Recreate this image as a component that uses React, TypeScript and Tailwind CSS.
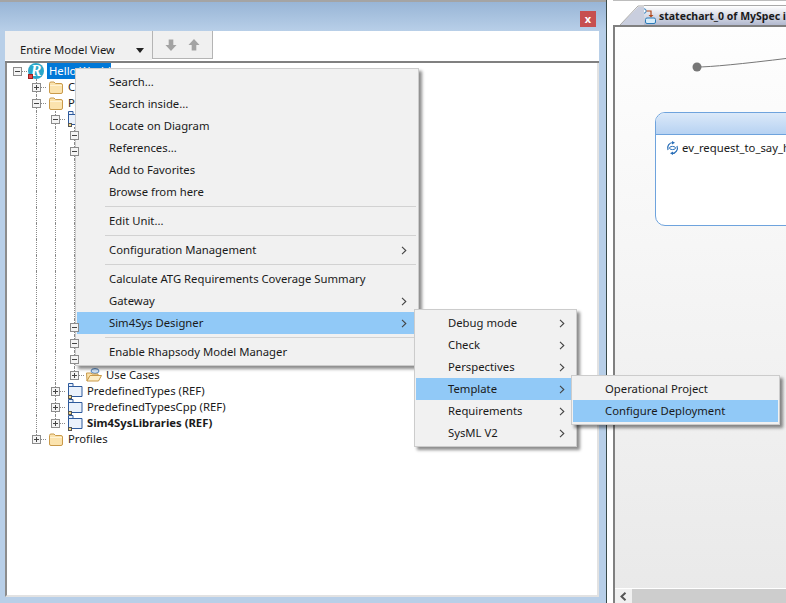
import React from "react";

const font = { fontFamily: '"Noto Sans", "Open Sans", sans-serif' };

function Chevron() {
  return (
    <svg width="6" height="9" viewBox="0 0 6 9" className="shrink-0">
      <path d="M1 0.8 L4.8 4.5 L1 8.2" fill="none" stroke="#444" strokeWidth="1.1" />
    </svg>
  );
}

function Folder() {
  return (
    <svg width="14" height="13" viewBox="0 0 14 13" className="shrink-0">
      <path d="M0.5 2.5 Q0.5 1 2 1 H5 L6.5 2.5 H12 Q13.5 2.5 13.5 4 V11 Q13.5 12.5 12 12.5 H2 Q0.5 12.5 0.5 11 Z" fill="#fbe3ae" stroke="#c99a4a" />
      <path d="M1 4.5 H13" stroke="#fff3d4" />
    </svg>
  );
}

function Pkg() {
  return (
    <svg width="16" height="16" viewBox="0 0 16 16" className="shrink-0">
      <path d="M1.5 0.5 H6 V3.5 H15 V13.5 H1.5 Z" fill="#eaf1fb" stroke="#2e5a9c" />
      <path d="M1.5 3.5 H6" stroke="#2e5a9c" />
      <rect x="1.5" y="12.5" width="3" height="3" fill="#f3d98a" stroke="#555" />
    </svg>
  );
}

function OpenUC() {
  return (
    <svg width="16" height="14" viewBox="0 0 16 14" className="shrink-0">
      <ellipse cx="9" cy="3" rx="4" ry="2.4" fill="#cfe2f6" stroke="#4d7fb8" />
      <path d="M0.5 5 H5 L6 6 H12 V8 H4 L1 13 Z" fill="#fbe3ae" stroke="#c99a4a" />
      <path d="M1 13 L4 7.5 H15.5 L12.5 13 Z" fill="#fdeec8" stroke="#c99a4a" />
    </svg>
  );
}

function Logo() {
  return (
    <div className="relative w-[16px] h-[16px] shrink-0 rounded-full bg-[#2aa7c9] flex items-center justify-center">
      <span className="text-white italic font-bold text-[16px] leading-none" style={{ fontFamily: '"Liberation Serif", serif' }}>R</span>
      <span className="absolute left-0 bottom-0 w-[5px] h-[5px] bg-[#e04a4a] border border-[#a02020]" />
    </div>
  );
}

function Box({ open }: { open: boolean }) {
  return (
    <div className="relative z-10 w-[9px] h-[9px] shrink-0 bg-[#f4f4f4] border border-[#8c8c8c] flex items-center justify-center">
      <span className="absolute w-[5px] h-px bg-[#444]" />
      {!open && <span className="absolute h-[5px] w-px bg-[#444]" />}
    </div>
  );
}

type Row = {
  depth: number;
  guides: number[];
  exp?: "plus" | "minus";
  icon?: React.ReactNode;
  label?: string;
  bold?: boolean;
  sel?: boolean;
  last?: boolean;
};

const blank = { depth: 3, guides: [1, 2] };
const rows: Row[] = [
  { depth: 0, guides: [], exp: "minus", icon: <Logo />, label: "Hello World", sel: true },
  { depth: 1, guides: [], exp: "plus", icon: <Folder />, label: "Components" },
  { depth: 1, guides: [], exp: "minus", icon: <Folder />, label: "Packages" },
  { depth: 2, guides: [1], exp: "minus", icon: <Pkg />, label: "MySpec" },
  { depth: 3, guides: [1, 2], exp: "minus" },
  { depth: 3, guides: [1, 2], exp: "minus" },
  ...Array.from({ length: 10 }, () => blank),
  { depth: 3, guides: [1, 2], exp: "minus" },
  { depth: 3, guides: [1, 2], exp: "minus" },
  { depth: 3, guides: [1, 2], exp: "minus" },
  { depth: 3, guides: [1, 2], exp: "plus", icon: <OpenUC />, label: "Use Cases", last: true },
  { depth: 2, guides: [1], exp: "plus", icon: <Pkg />, label: "PredefinedTypes (REF)" },
  { depth: 2, guides: [1], exp: "plus", icon: <Pkg />, label: "PredefinedTypesCpp (REF)" },
  { depth: 2, guides: [1], exp: "plus", icon: <Pkg />, label: "Sim4SysLibraries (REF)", bold: true, last: true },
  { depth: 1, guides: [], exp: "plus", icon: <Folder />, label: "Profiles", last: true },
];

function TreeRow({ r }: { r: Row }) {
  const cols = [0, 1, 2, 3].slice(0, r.depth);
  const iconM = r.depth === 0 ? 1 : r.depth === 1 ? 3 : 2;
  const textCls = r.sel
    ? "ml-[3px] px-[2px] w-[64px] bg-[#0078d7] text-white "
    : r.depth === 1
      ? "ml-[5px] text-[#1a1a1a] "
      : "ml-[4px] text-[#1a1a1a] ";
  return (
    <div className="flex h-4 items-center pl-[1px]">
      {cols.map((c) => (
        <div key={c} className="w-[19px] h-full shrink-0 pl-[9px]">
          {r.guides.includes(c) && <div className="h-full border-l border-dotted border-[#8a8a8a]" />}
        </div>
      ))}
      <div className="relative w-[19px] h-full shrink-0 flex items-center pl-[5px]">
        {r.depth > 0 && (
          <div className={"absolute left-[9px] top-0 border-l border-dotted border-[#8a8a8a] " + (r.last ? "h-1/2" : "h-full")} />
        )}
        {r.exp && <Box open={r.exp === "minus"} />}
        {r.icon && <div className="flex-1 border-t border-dotted border-[#8a8a8a]" />}
      </div>
      {r.icon && <div style={{ marginLeft: iconM }} className="flex items-center">{r.icon}</div>}
      {r.label && (
        <span className={"whitespace-nowrap text-[11.3px] leading-4 " + textCls + (r.bold ? "font-bold" : "")}>
          {r.label}
        </span>
      )}
    </div>
  );
}

function Item({ label, arrow, hot, tight }: { label: string; arrow?: boolean; hot?: boolean; tight?: boolean }) {
  return (
    <div
      className={
        "h-[22px] flex items-center pl-[32px] text-[11.3px] text-[#1a1a1a] whitespace-nowrap " +
        (tight ? "pr-[10px] " : "pr-[9px] ") +
        (hot ? "bg-[#91c9f7]" : "")
      }
    >
      <span className="flex-1">{label}</span>
      {arrow && <Chevron />}
    </div>
  );
}

function Sep() {
  return (
    <div className="h-[7px] flex items-center pl-[28px] pr-[1px]">
      <div className="h-px w-full bg-[#d2d2d2]" />
    </div>
  );
}

const menuCls = "absolute border border-[#cccccc] bg-[#f1f1f1] py-[2px] px-[1px] shadow-[3px_3px_3px_rgba(0,0,0,0.45)]";

export default function App() {
  return (
    <div className="relative w-[786px] h-[603px] overflow-hidden flex bg-white" style={font}>
      {/* left docked pane */}
      <div className="w-[606px] h-full shrink-0 flex flex-col bg-[#b8cfe8] border-t-2 border-[#a4a4a4]">
        <div className="h-[29px] shrink-0 bg-gradient-to-b from-[#98b5d6] to-[#b8cfe8] flex justify-end items-start pt-[9px] pr-[10px]">
          <div className="w-[16px] h-[16px] bg-[#c75050] text-white text-[11px] font-bold leading-[15px] text-center">x</div>
        </div>
        <div className="flex-1 ml-[5px] mr-[7px] mb-[6px] bg-white flex flex-col min-h-0">
          <div className="h-[32px] shrink-0 flex items-start border-b-2 border-[#808080]">
            <div className="w-[147px] h-[29px] bg-[#f0f0f0] flex items-center pl-[15px] pr-[8px] pt-[10px] text-[11.3px] text-[#1a1a1a]">
              <span className="flex-1 whitespace-nowrap">Entire Model View</span>
              <svg width="8" height="5" viewBox="0 0 8 5"><path d="M0 0 H8 L4 5 Z" fill="#222" /></svg>
            </div>
            <div className="w-[61px] h-[28px] bg-[#f0f0f0] border-x border-b border-[#b4b4b4] flex items-center justify-center gap-[11px]">
              <svg width="12" height="14" viewBox="0 0 13 14"><path d="M4 1 H9 V7 H12.5 L6.5 13.5 L0.5 7 H4 Z" fill="#a3a3a3" /></svg>
              <svg width="12" height="14" viewBox="0 0 13 14"><path d="M4 13 H9 V7 H12.5 L6.5 0.5 L0.5 7 H4 Z" fill="#a3a3a3" /></svg>
            </div>
          </div>
          <div className="flex-1 border-l-2 border-[#8c8c8c] border-b-2 border-b-[#e2e2e2] border-r-2 border-r-[#e2e2e2] overflow-hidden">
            {rows.map((r, i) => (
              <TreeRow key={i} r={r} />
            ))}
          </div>
        </div>
      </div>

      {/* splitter */}
      <div className="w-[7px] h-full shrink-0 bg-white border-l border-[#3a4a4a]" />

      {/* right diagram pane */}
      <div className="flex-1 min-w-0 h-full flex flex-col bg-white border-t border-[#bdbdbd]">
        <div className="h-[24px] shrink-0 flex items-end">
          <svg width="24" height="20" viewBox="0 0 24 20" className="shrink-0 ml-[7px]">
            <path d="M0 20 L18 2 H24 V20 Z" fill="#c9cede" />
            <path d="M0 20 L18 1 H24" fill="none" stroke="#a9a9a9" />
          </svg>
          <div className="flex-1 h-[20px] bg-gradient-to-b from-[#ffffff] to-[#b3bacf] flex items-center overflow-hidden border-t border-[#a9a9a9]">
            <svg width="15" height="16" viewBox="0 0 15 16" className="shrink-0 -ml-[3px]">
              <circle cx="3" cy="3" r="2.2" fill="#fff" stroke="#2a7ab8" />
              <path d="M5.5 3 H10 V8" fill="none" stroke="#b0481a" strokeWidth="1.2" />
              <path d="M7.5 7 H12.5 L10 9.5 Z" fill="#b0481a" />
              <rect x="4.5" y="10" width="10" height="5.5" rx="1.5" fill="#d6ecfa" stroke="#2a7ab8" />
            </svg>
            <span className="ml-[3px] pt-[2px] whitespace-nowrap text-[10.5px] font-bold text-[#1a1a1a]">statechart_0 of MySpec i...</span>
          </div>
        </div>
        <div className="relative flex-1 min-h-0 border-l-2 border-t-2 border-[#808080] bg-gradient-to-b from-[#fefefe] to-[#e9e9e9] overflow-hidden">
          <svg width="171" height="30" viewBox="0 0 171 30" className="absolute left-0 top-[25px]">
            <circle cx="82" cy="15" r="4.5" fill="#777" />
            <path d="M82 15 Q102 15 175 6" fill="none" stroke="#777" />
          </svg>
          <div className="absolute left-[40px] top-[85px] w-[200px] h-[114px] rounded-[10px] border border-[#6ea3dd] bg-white overflow-hidden">
            <div className="h-[22px] bg-gradient-to-b from-[#dbe9f9] to-[#b7d2f2] border-b border-[#6ea3dd]" />
            <div className="flex items-center pl-[10px] pt-[5px] text-[11.3px] text-[#1a1a1a] whitespace-nowrap">
              <svg width="13" height="14" viewBox="0 0 13 14" className="shrink-0 mr-[3px]">
                <path d="M2 9 A5.5 5.5 0 0 1 7 1.5 M11 5 A5.5 5.5 0 0 1 6 12.5" fill="none" stroke="#2a6fb8" strokeWidth="1.2" />
                <path d="M6 0 L9 1.8 L6 3.5 Z M7 10.5 L4 12.3 L7 14 Z" fill="#2a6fb8" />
                <ellipse cx="6.5" cy="7" rx="3" ry="1.6" fill="none" stroke="#2a6fb8" />
              </svg>
              ev_request_to_say_hello
            </div>
          </div>
          <div className="absolute left-0 right-0 bottom-0 h-[15px] border-t border-white bg-[#cdcdcd] flex">
            <div className="w-[17px] h-full bg-[#f0f0f0] flex items-center justify-center">
              <svg width="7" height="9" viewBox="0 0 7 9"><path d="M5.5 0.8 L1.5 4.5 L5.5 8.2" fill="none" stroke="#555" strokeWidth="2" /></svg>
            </div>
          </div>
        </div>
      </div>

      {/* context menus */}
      <div className={menuCls + " left-[75px] top-[68px] w-[344px]"}>
        <Item label="Search..." />
        <Item label="Search inside..." />
        <Item label="Locate on Diagram" />
        <Item label="References..." />
        <Item label="Add to Favorites" />
        <Item label="Browse from here" />
        <Sep />
        <Item label="Edit Unit..." />
        <Sep />
        <Item label="Configuration Management" arrow tight />
        <Sep />
        <Item label="Calculate ATG Requirements Coverage Summary" />
        <Item label="Gateway" arrow tight />
        <Item label="Sim4Sys Designer" arrow hot tight />
        <Sep />
        <Item label="Enable Rhapsody Model Manager" />
      </div>
      <div className={menuCls + " left-[414px] top-[309px] w-[163px]"}>
        <Item label="Debug mode" arrow tight />
        <Item label="Check" arrow tight />
        <Item label="Perspectives" arrow tight />
        <Item label="Template" arrow hot tight />
        <Item label="Requirements" arrow tight />
        <Item label="SysML V2" arrow tight />
      </div>
      <div className={menuCls + " left-[571px] top-[375px] w-[209px]"}>
        <Item label="Operational Project" />
        <Item label="Configure Deployment" hot />
      </div>
    </div>
  );
}
